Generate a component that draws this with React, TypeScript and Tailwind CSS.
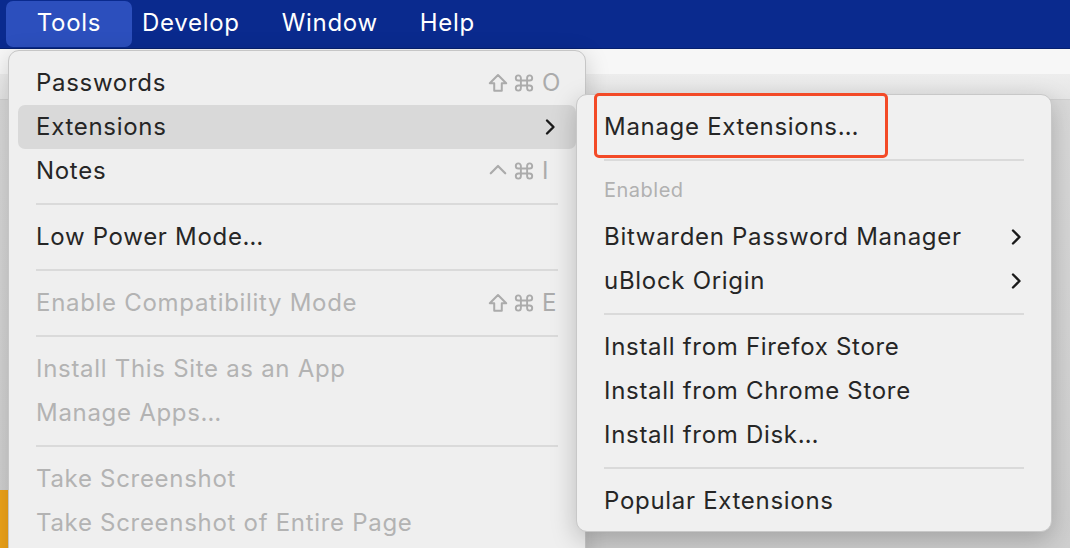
import React from "react";

type Item =
  | { kind: "item"; label: string; keys?: string[]; sub?: boolean; active?: boolean; disabled?: boolean }
  | { kind: "sep" }
  | { kind: "header"; label: string };

const mainMenu: Item[] = [
  { kind: "item", label: "Passwords", keys: ["shift", "cmd", "O"] },
  { kind: "item", label: "Extensions", sub: true, active: true },
  { kind: "item", label: "Notes", keys: ["ctrl", "cmd", "I"] },
  { kind: "sep" },
  { kind: "item", label: "Low Power Mode…" },
  { kind: "sep" },
  { kind: "item", label: "Enable Compatibility Mode", keys: ["shift", "cmd", "E"], disabled: true },
  { kind: "sep" },
  { kind: "item", label: "Install This Site as an App", disabled: true },
  { kind: "item", label: "Manage Apps…", disabled: true },
  { kind: "sep" },
  { kind: "item", label: "Take Screenshot", disabled: true },
  { kind: "item", label: "Take Screenshot of Entire Page", disabled: true },
];

const extMenu: Item[] = [
  { kind: "item", label: "Manage Extensions…" },
  { kind: "sep" },
  { kind: "header", label: "Enabled" },
  { kind: "item", label: "Bitwarden Password Manager", sub: true },
  { kind: "item", label: "uBlock Origin", sub: true },
  { kind: "sep" },
  { kind: "item", label: "Install from Firefox Store" },
  { kind: "item", label: "Install from Chrome Store" },
  { kind: "item", label: "Install from Disk…" },
  { kind: "sep" },
  { kind: "item", label: "Popular Extensions" },
];

function Chevron() {
  return (
    <svg width="12" height="18" viewBox="0 0 12 18" fill="none">
      <path d="M3 2.5l6.5 6.5L3 15.5" stroke="#1a1a1a" strokeWidth="2.4" strokeLinecap="round" strokeLinejoin="round" />
    </svg>
  );
}

function Mod({ k }: { k: string }) {
  if (k === "ctrl") {
    return (
      <svg width="20" height="20" viewBox="0 0 18 18" fill="none">
        <path d="M2.5 11L9 4.5l6.5 6.5" stroke="currentColor" strokeWidth="2" strokeLinecap="round" strokeLinejoin="round" />
      </svg>
    );
  }
  if (k === "shift") {
    return (
      <svg width="20" height="20" viewBox="0 0 18 18" fill="none">
        <path d="M9 1.8L16.4 9.2H12.4V16H5.6V9.2H1.6Z" stroke="currentColor" strokeWidth="1.8" strokeLinejoin="round" />
      </svg>
    );
  }
  return (
    <svg width="20" height="20" viewBox="0 0 18 18" fill="none">
      <path
        d="M6.2 6.2V4.4a2.3 2.3 0 1 0-2.3 2.3h10.2a2.3 2.3 0 1 0-2.3-2.3v9.2a2.3 2.3 0 1 0 2.3-2.3H3.9a2.3 2.3 0 1 0 2.3 2.3Z"
        stroke="currentColor"
        strokeWidth="1.7"
        strokeLinejoin="round"
      />
    </svg>
  );
}

function Shortcut({ keys }: { keys: string[] }) {
  return (
    <div className="flex items-center text-[#ababab]">
      <span className="w-[23px] flex justify-center">
        <Mod k={keys[0]} />
      </span>
      <span className="ml-[3px] w-[23px] flex justify-center">
        <Mod k={keys[1]} />
      </span>
      <span className="ml-[7px] w-[21px] text-left">{keys[2]}</span>
    </div>
  );
}

function MenuList({ items }: { items: Item[] }) {
  return (
    <>
      {items.map((it, i) => {
        if (it.kind === "sep") {
          return (
            <div key={i} className="h-[22px] flex items-center px-[18px]">
              <div className="h-[2px] w-full bg-[#dadada]" />
            </div>
          );
        }
        if (it.kind === "header") {
          return (
            <div key={i} className="h-[44px] flex items-center px-[18px] pb-[6px] text-[20px] tracking-[0.5px] text-[#b1b1b1]">
              {it.label}
            </div>
          );
        }
        return (
          <div
            key={i}
            className={`h-[44px] flex items-center justify-between pl-[18px] rounded-[7px] ${
              it.sub ? "pr-[20px]" : "pr-[13px]"
            } ${it.active ? "bg-[#d9d9d9]" : ""} ${it.disabled ? "text-[#b3b3b3]" : "text-[#262626]"}`}
          >
            <span>{it.label}</span>
            {it.keys && <Shortcut keys={it.keys} />}
            {it.sub && <Chevron />}
          </div>
        );
      })}
    </>
  );
}

export default function App() {
  return (
    <div className="relative w-[1070px] h-[548px] overflow-hidden bg-[#d5d5d5] font-['Inter','Liberation_Sans',sans-serif] text-[24px] tracking-[0.7px]">
      {/* menu bar */}
      <div className="h-[49px] bg-[#0a2a8e] border-b border-[#06206f] flex items-start pt-[1px] pl-[6px] text-white">
        <div className="h-[46px] w-[126px] pb-[3px] flex items-center justify-center rounded-[7px] bg-[#2c4fbd]">Tools</div>
        <div className="ml-[10px] h-[46px] pb-[3px] flex items-center gap-[42px]">
          <span>Develop</span>
          <span>Window</span>
          <span>Help</span>
        </div>
      </div>

      {/* window behind */}
      <div className="flex flex-col">
        <div className="h-[25px] bg-[#f7f7f7]" />
        <div className="h-[26px] bg-gradient-to-b from-[#ededed] to-[#e5e5e5] border-b border-[#d0d0d0]" />
        <div className="h-[448px] bg-gradient-to-b from-[#d9d9d9] to-[#cfcfcf]" />
      </div>
      <div className="absolute left-0 bottom-0 w-[10px] h-[58px] bg-[#efa41a]" />

      {/* Tools menu */}
      <div className="absolute left-[8px] top-[50px] w-[578px] h-[520px] rounded-[11px] bg-[#efefef] border border-[#c6c6c6] shadow-[0_6px_24px_rgba(0,0,0,0.18)] pt-[10px] px-[9px]">
        <MenuList items={mainMenu} />
      </div>

      {/* Extensions submenu */}
      <div className="absolute left-[576px] top-[94px] w-[476px] h-[438px] rounded-[11px] bg-[#f0f0f0] border border-[#c8c8c8] shadow-[0_8px_26px_rgba(0,0,0,0.22)] pt-[10px] px-[9px]">
        <MenuList items={extMenu} />
      </div>

      {/* highlight box */}
      <div className="absolute left-[594px] top-[93px] w-[294px] h-[65px] border-[3px] border-[#f34a27] rounded-[5px]" />
    </div>
  );
}
